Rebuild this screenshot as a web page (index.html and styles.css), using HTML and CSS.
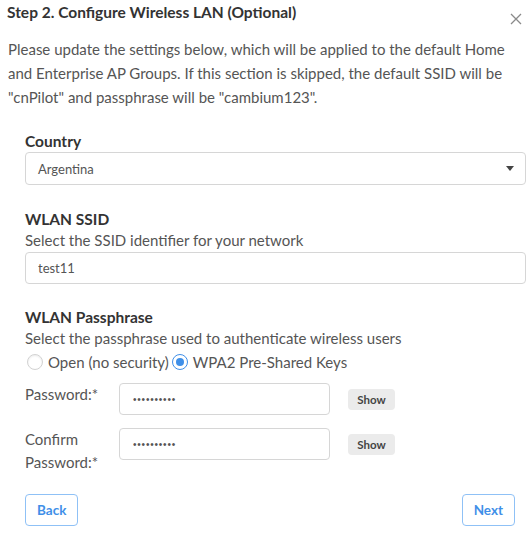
FILE: index.html
```html
<!DOCTYPE html>
<html lang="en">
<head>
    <meta charset="UTF-8">
    <meta name="viewport" content="width=device-width, initial-scale=1.0">
    <title>Configure Wireless LAN</title>
    <link rel="stylesheet" href="styles.css">
</head>
<body>
<div class="modal">
    <div class="modal-header">
        <h2>Step 2. Configure Wireless LAN (Optional)</h2>
        <button class="close" type="button" aria-label="Close">
            <svg width="12" height="12" viewBox="0 0 12 12"><path d="M1 1 L11 11 M11 1 L1 11" stroke="#8a8a8a" stroke-width="1.3" fill="none"/></svg>
        </button>
    </div>

    <p class="intro">Please update the settings below, which will be applied to the default Home and Enterprise AP Groups. If this section is skipped, the default SSID will be "cnPilot" and passphrase will be "cambium123".</p>

    <form class="wlan-form">
        <div class="field">
            <label class="field-label">Country</label>
            <div class="select-box">
                <span>Argentina</span>
                <span class="caret"></span>
            </div>
        </div>

        <div class="field">
            <label class="field-label" for="ssid">WLAN SSID</label>
            <div class="field-help">Select the SSID identifier for your network</div>
            <input class="text-input" type="text" id="ssid" value="test11">
        </div>

        <div class="field">
            <div class="field-label">WLAN Passphrase</div>
            <div class="field-help">Select the passphrase used to authenticate wireless users</div>
            <div class="radio-row">
                <label class="radio"><span class="radio-dot"></span>Open (no security)</label>
                <label class="radio checked"><span class="radio-dot"></span>WPA2 Pre-Shared Keys</label>
            </div>

            <div class="pass-row">
                <label class="pass-label" for="pass1">Password:*</label>
                <input class="pass-input" type="password" id="pass1" value="cambium123">
                <button class="show-btn" type="button">Show</button>
            </div>
            <div class="pass-row">
                <label class="pass-label" for="pass2">Confirm Password:*</label>
                <input class="pass-input" type="password" id="pass2" value="cambium123">
                <button class="show-btn" type="button">Show</button>
            </div>
        </div>
    </form>

    <div class="modal-footer">
        <button class="outline-btn" type="button">Back</button>
        <button class="outline-btn" type="button">Next</button>
    </div>
</div>
</body>
</html>
```

FILE: styles.css
```css
body {
    margin: 0;
    background-color: #ffffff;
    font-family: 'Lato', 'Liberation Sans', sans-serif;
    color: #555555;
}
.modal {
    width: 531px;
    height: 534px;
    box-sizing: border-box;
}
.modal-header {
    display: flex;
    justify-content: space-between;
    align-items: flex-start;
    padding: 3px 9px 0 7px;
}
.modal-header h2 {
    margin: 0;
    font-size: 15.5px;
    line-height: 18px;
    font-weight: bold;
    color: #333333;
}
.close {
    background: none;
    border: none;
    padding: 0;
    margin-top: 10px;
    width: 12px;
    height: 12px;
    cursor: pointer;
}
.close svg {
    display: block;
}
.intro {
    margin: 12px 0 0 0;
    padding: 0 8px;
    font-size: 15px;
    line-height: 24px;
    color: #555555;
}
.wlan-form {
    padding: 0 5px 0 25px;
}
.field {
    margin-top: 22px;
}
.field + .field {
    margin-top: 24px;
}
.field + .field + .field {
    margin-top: 23px;
}
.field-label {
    display: block;
    font-size: 15.5px;
    line-height: 20px;
    font-weight: bold;
    color: #333333;
}
.field-help {
    font-size: 15px;
    line-height: 22px;
    color: #555555;
    margin-top: 0;
}
.select-box {
    display: flex;
    justify-content: space-between;
    align-items: center;
    height: 33px;
    margin-top: 1px;
    box-sizing: border-box;
    border: 1px solid #d6d6d6;
    border-radius: 4px;
    padding: 0 11px 0 12px;
    font-size: 13px;
    color: #555555;
}
.caret {
    width: 0;
    height: 0;
    border-left: 4px solid transparent;
    border-right: 4px solid transparent;
    border-top: 5px solid #444444;
}
.text-input {
    display: block;
    width: 100%;
    height: 32px;
    margin-top: 1px;
    box-sizing: border-box;
    border: 1px solid #d6d6d6;
    border-radius: 4px;
    padding: 0 12px;
    font-family: inherit;
    font-size: 13px;
    color: #555555;
}
.radio-row {
    display: flex;
    align-items: center;
    height: 22px;
    margin-top: 2px;
    margin-left: 2px;
    font-size: 15px;
    color: #555555;
}
.radio {
    display: flex;
    align-items: center;
    margin-right: 3px;
}
.radio-dot {
    width: 16px;
    height: 16px;
    box-sizing: border-box;
    border: 1px solid #d2d2d2;
    border-radius: 50%;
    margin-right: 5px;
    display: flex;
    align-items: center;
    justify-content: center;
    box-shadow: inset 0 1px 2px rgba(0,0,0,0.08);
}
.radio.checked .radio-dot {
    border-color: #3f8fe8;
    box-shadow: none;
}
.radio.checked .radio-dot::after {
    content: "";
    width: 8px;
    height: 8px;
    border-radius: 50%;
    background-color: #3f8fe8;
}
.pass-row {
    display: flex;
    align-items: flex-start;
    margin-top: 10px;
}
.pass-row + .pass-row {
    margin-top: 13px;
}
.pass-label {
    width: 94px;
    font-size: 15px;
    line-height: 23px;
    color: #555555;
}
.pass-input {
    width: 211px;
    height: 32px;
    box-sizing: border-box;
    border: 1px solid #d6d6d6;
    border-radius: 4px;
    padding: 0 13px;
    font-size: 10px;
    letter-spacing: 0.8px;
    color: #555555;
}
.show-btn {
    margin: 6px 0 0 18px;
    width: 47px;
    height: 21px;
    border: none;
    border-radius: 4px;
    background-color: #ebebeb;
    font-family: inherit;
    font-size: 11.5px;
    font-weight: bold;
    color: #444444;
    padding: 0;
}
.modal-footer {
    display: flex;
    justify-content: space-between;
    padding: 0 16px 0 25px;
    margin-top: 20px;
}
.outline-btn {
    height: 32px;
    padding: 0 11px;
    background-color: #ffffff;
    border: 1px solid #8fc1f6;
    border-radius: 4px;
    font-family: inherit;
    font-size: 13.5px;
    font-weight: bold;
    color: #3f8fe8;
    cursor: pointer;
}
```
